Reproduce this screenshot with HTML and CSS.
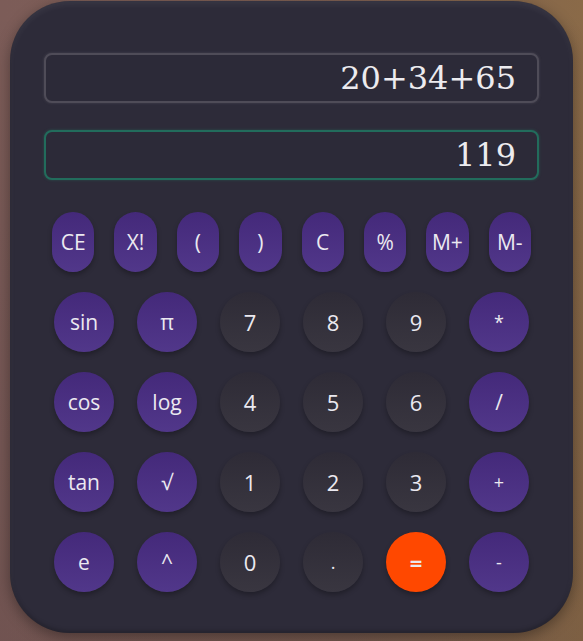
FILE: index.html
```html
<!DOCTYPE html>
<html lang="en">
<head>
<meta charset="utf-8">
<title>Calculator</title>
<link rel="stylesheet" href="styles.css">
</head>
<body>
<div class="calc">
  <div class="display expr">20+34+65</div>
  <div class="display result">119</div>
  <div class="row-pills">
    <button class="btn fn pill">CE</button>
    <button class="btn fn pill">X!</button>
    <button class="btn fn pill">(</button>
    <button class="btn fn pill">)</button>
    <button class="btn fn pill">C</button>
    <button class="btn fn pill">%</button>
    <button class="btn fn pill">M+</button>
    <button class="btn fn pill">M-</button>
  </div>
  <div class="grid">
    <button class="btn fn">sin</button>
    <button class="btn fn">π</button>
    <button class="btn num">7</button>
    <button class="btn num">8</button>
    <button class="btn num">9</button>
    <button class="btn fn op">*</button>

    <button class="btn fn">cos</button>
    <button class="btn fn">log</button>
    <button class="btn num">4</button>
    <button class="btn num">5</button>
    <button class="btn num">6</button>
    <button class="btn fn">/</button>

    <button class="btn fn">tan</button>
    <button class="btn fn">√</button>
    <button class="btn num">1</button>
    <button class="btn num">2</button>
    <button class="btn num">3</button>
    <button class="btn fn op">+</button>

    <button class="btn fn">e</button>
    <button class="btn fn">^</button>
    <button class="btn num">0</button>
    <button class="btn num op">.</button>
    <button class="btn eq">=</button>
    <button class="btn fn op">-</button>
  </div>
</div>
</body>
</html>
```
FILE: styles.css
```css
* { box-sizing: border-box; }
html, body { margin: 0; padding: 0; }
body {
  width: 583px;
  height: 641px;
  overflow: hidden;
  background:
    linear-gradient(to bottom, rgba(0,0,0,0) 0%, rgba(30,20,30,0.12) 100%),
    linear-gradient(to right, #7c5c58 0%, #7e6052 60%, #8a6a48 100%);
  font-family: "Open Sans", "Noto Sans", sans-serif;
  padding-top: 1px;
}
.calc {
  width: 563px;
  height: 632px;
  margin: 0 auto;
  background: #2d2b39;
  border-radius: 60px;
  padding: 52px 34px 0 34px;
  display: flex;
  flex-direction: column;
  box-shadow: inset 0 3px 6px rgba(255,255,255,0.07), inset 0 -2px 4px rgba(0,0,0,0.25), 0 4px 14px rgba(0,0,0,0.35);
}
.display {
  height: 50px;
  border-radius: 8px;
  font-family: "DejaVu Serif", serif;
  font-size: 32px;
  color: #ecebef;
  text-align: right;
  padding: 0 21px;
  line-height: 46px;
  background: #2c2a38;
}
.expr {
  border: 2px solid #4f4c58;
  box-shadow: 0 0 3px rgba(120,118,130,0.35);
}
.result {
  margin-top: 27px;
  border: 2px solid #226c5c;
  box-shadow: 0 0 3px rgba(40,140,110,0.4);
}
.row-pills {
  margin: 32px 8px 0 8px;
  display: grid;
  grid-template-columns: repeat(8, 1fr);
  column-gap: 20px;
}
.grid {
  margin: 20px 10px 0 10px;
  display: grid;
  grid-template-columns: repeat(6, 60px);
  justify-content: space-between;
  row-gap: 20px;
}
.btn {
  border: none;
  padding: 0;
  height: 60px;
  width: 60px;
  border-radius: 50%;
  color: #ebe9f0;
  font-family: "Open Sans", "Noto Sans", sans-serif;
  font-size: 21px;
  line-height: 1;
  box-shadow: 0 3px 5px rgba(0,0,0,0.28);
}
.pill {
  width: 100%;
  border-radius: 22px;
}
.fn {
  background: linear-gradient(to bottom, #44297a, #51378a);
}
.num {
  background: linear-gradient(to bottom, #2e2b36, #393640);
  font-size: 22px;
}
.op { font-size: 18px; }
.eq {
  background: #ff4800;
  font-size: 22px;
  font-weight: bold;
}
```
